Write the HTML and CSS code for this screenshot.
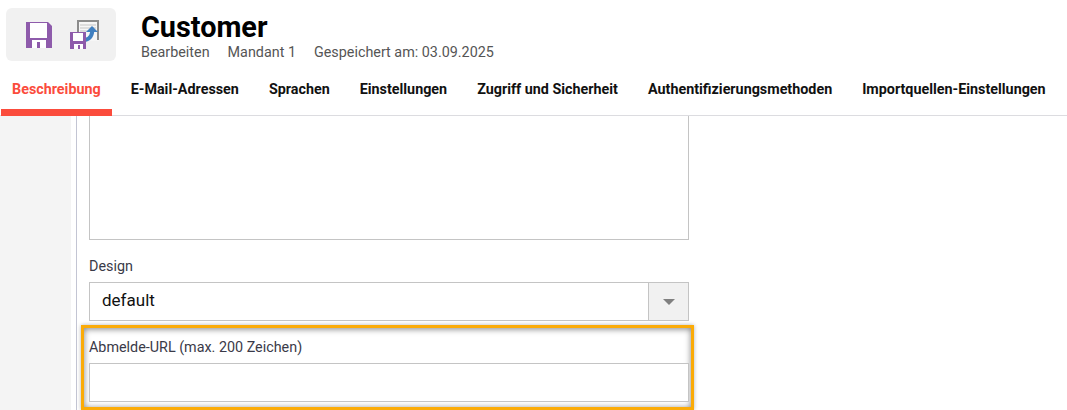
FILE: index.html
```html
<!DOCTYPE html>
<html lang="de">
<head>
    <meta charset="UTF-8">
    <title>Customer</title>
    <link rel="stylesheet" href="styles.css">
</head>
<body>

    <header class="top">
        <div class="toolbar">
            <svg width="26" height="26" viewBox="0 0 26 26">
                <path fill="#8e5bab" d="M0 0h22l4 4v22H0z"/>
                <path fill="#fff" d="M4 1h17v15H4z"/>
                <path fill="#fff" d="M6 18h14v8H6z"/>
                <path fill="#8e5bab" d="M11 20h3v6h-3z"/>
            </svg>
            <svg width="29" height="29" viewBox="0 0 29 29">
                <path fill="#f6f6f6" d="M7 0h22v21H7z"/>
                <path fill="none" stroke="#8c8c8c" stroke-width="2" d="M8 20V1h20v19"/>
                <path fill="none" stroke="#c4c4c4" d="M10 5h16M10 8h16M10 11h16M10 14h6"/>
                <path fill="none" stroke="#3f7fc0" stroke-width="4" d="M15 20c5-1 8-5 7-12"/>
                <path fill="#3f7fc0" d="M16 12l6-6 6 6z"/>
                <path fill="#8e5bab" d="M0 12h16v17H0z"/>
                <path fill="#fff" d="M3 13h10v8H3zM4 24h9v5H4z"/>
                <path fill="#8e5bab" d="M8 25h2v4H8z"/>
            </svg>
        </div>
        <div class="heading">
            <h1>Customer</h1>
            <div class="meta">
                <span>Bearbeiten</span>
                <span>Mandant 1</span>
                <span>Gespeichert am: 03.09.2025</span>
            </div>
        </div>
    </header>

    <nav class="tabs">
        <a class="tab active">Beschreibung</a>
        <a class="tab">E-Mail-Adressen</a>
        <a class="tab">Sprachen</a>
        <a class="tab">Einstellungen</a>
        <a class="tab">Zugriff und Sicherheit</a>
        <a class="tab">Authentifizierungsmethoden</a>
        <a class="tab">Importquellen-Einstellungen</a>
    </nav>

    <div class="content">
        <div class="sidebar"></div>
        <main class="form">
            <div class="textarea"></div>

            <label class="field-label design-label">Design</label>
            <div class="select">
                <span class="select-value">default</span>
                <span class="select-btn"><span class="arrow"></span></span>
            </div>

            <div class="highlight">
                <label class="field-label">Abmelde-URL (max. 200 Zeichen)</label>
                <div class="input"></div>
            </div>
        </main>
    </div>

</body>
</html>
```

FILE: styles.css
```css
* {
    box-sizing: border-box;
}
html, body {
    height: 100%;
}
body {
    font-family: Roboto, Arial, sans-serif;
    background-color: #fff;
    margin: 0;
    overflow: hidden;
    display: flex;
    flex-direction: column;
}
.top {
    display: flex;
    flex: none;
    height: 72px;
    padding: 8px 0 0 6px;
}
.toolbar {
    width: 110px;
    height: 53px;
    background-color: #f1f1f1;
    border-radius: 6px;
    display: flex;
    align-items: center;
    padding: 0 0 0 20px;
    gap: 18px;
}
.heading {
    margin-left: 25px;
}
h1 {
    font-size: 28.8px;
    font-weight: 700;
    line-height: 32px;
    margin: 3px 0 1px;
    color: #000;
}
.meta {
    display: flex;
    gap: 18px;
    font-size: 14.35px;
    line-height: 18px;
    color: #555;
}
.tabs {
    display: flex;
    flex: none;
    height: 44px;
    padding-left: 1px;
    border-bottom: 1px solid #dcdce0;
}
.tab {
    padding: 8px 11px 0;
    margin-right: 8px;
    font-size: 14.33px;
    font-weight: 700;
    line-height: 18px;
    white-space: nowrap;
    color: #111;
    height: 44px;
}
.tab.active {
    color: #fb4c3c;
    border-bottom: 7px solid #fb4c3c;
}
.content {
    flex: 1;
    display: flex;
    min-height: 0;
}
.sidebar {
    width: 71px;
    background-color: #f4f4f4;
}
.form {
    margin-left: 5px;
    flex: 1;
    border-left: 1px solid #c3c5d3;
    padding-left: 12px;
    min-height: 0;
}
.textarea {
    width: 600px;
    height: 124px;
    border: 1px solid #c4c4c4;
    border-top: 0;
}
.field-label {
    display: block;
    font-size: 14.35px;
    line-height: 18px;
    color: #3a3a48;
}
.design-label {
    margin-top: 18px;
    margin-bottom: 6px;
}
.select {
    display: flex;
    width: 600px;
    height: 39px;
    border: 1px solid #c4c4c4;
}
.select-value {
    flex: 1;
    padding-left: 12px;
    font-size: 17px;
    line-height: 34px;
    color: #111;
}
.select-btn {
    width: 40px;
    background-color: #f1f1f1;
    border-left: 1px solid #c4c4c4;
    display: flex;
    align-items: center;
    justify-content: center;
}
.arrow {
    width: 0;
    height: 0;
    border-left: 6px solid transparent;
    border-right: 6px solid transparent;
    border-top: 6px solid #808080;
}
.highlight {
    width: 613px;
    height: 85px;
    margin: 4px 0 0 -8px;
    padding: 11px 0 0 5px;
    border: 3px solid #fbab07;
    box-shadow: inset 0 1px 6px rgba(0, 0, 0, 0.5), 0 0 4px rgba(0, 0, 0, 0.3);
}
.highlight .field-label {
    margin-bottom: 6px;
}
.input {
    width: 600px;
    height: 39px;
    border: 1px solid #c4c4c4;
    background-color: #fff;
}
```
